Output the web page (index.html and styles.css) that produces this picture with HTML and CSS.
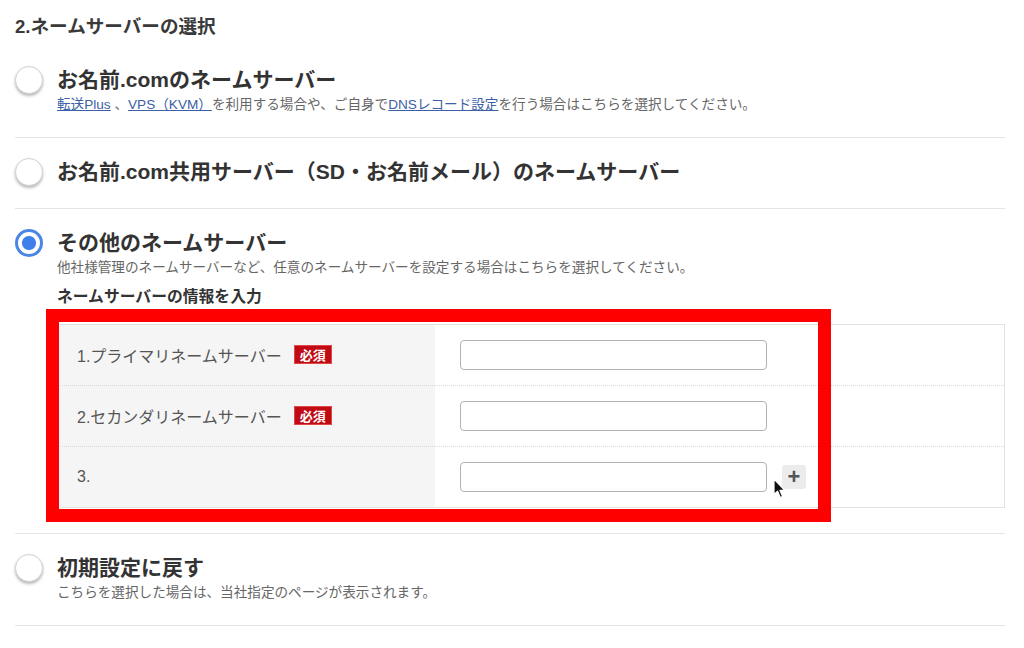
FILE: index.html
```html
<!DOCTYPE html>
<html lang="ja">
<head>
    <meta charset="UTF-8">
    <meta name="viewport" content="width=device-width, initial-scale=1.0">
    <title>ネームサーバーの選択</title>
    <link rel="stylesheet" href="styles.css">
</head>
<body>
    <div class="page">
        <h2 class="section-title">2.ネームサーバーの選択</h2>

        <div class="option">
            <span class="radio"></span>
            <div class="option-body">
                <div class="option-title">お名前.comのネームサーバー</div>
                <p class="option-note"><a href="#">転送Plus</a> 、<a href="#">VPS（KVM）</a>を利用する場合や、ご自身で<a href="#">DNSレコード設定</a>を行う場合はこちらを選択してください。</p>
            </div>
        </div>

        <div class="option option-short">
            <span class="radio"></span>
            <div class="option-body">
                <div class="option-title">お名前.com共用サーバー（SD・お名前メール）のネームサーバー</div>
            </div>
        </div>

        <div class="option option-open">
            <span class="radio checked"></span>
            <div class="option-body">
                <div class="option-title">その他のネームサーバー</div>
                <p class="option-note">他社様管理のネームサーバーなど、任意のネームサーバーを設定する場合はこちらを選択してください。</p>
                <div class="input-heading">ネームサーバーの情報を入力</div>

                <div class="ns-box">
                    <table class="ns-table">
                        <tr>
                            <th>1.プライマリネームサーバー<span class="required">必須</span></th>
                            <td><input type="text"></td>
                        </tr>
                        <tr>
                            <th>2.セカンダリネームサーバー<span class="required">必須</span></th>
                            <td><input type="text"></td>
                        </tr>
                        <tr>
                            <th>3.</th>
                            <td>
                                <div class="input-row">
                                    <input type="text">
                                    <span class="add-btn">+</span>
                                    <svg class="cursor" width="14" height="21" viewBox="0 0 14 21">
                                        <path d="M1 1 L1 16.5 L4.6 13.2 L7.3 19.6 L9.6 18.6 L7 12.4 L11.8 12.4 Z" fill="#111" stroke="#fff" stroke-width="1.2" stroke-linejoin="round"/>
                                    </svg>
                                </div>
                            </td>
                        </tr>
                    </table>
                    <div class="highlight"></div>
                </div>
            </div>
        </div>

        <div class="option">
            <span class="radio"></span>
            <div class="option-body">
                <div class="option-title">初期設定に戻す</div>
                <p class="option-note">こちらを選択した場合は、当社指定のページが表示されます。</p>
            </div>
        </div>
    </div>
</body>
</html>
```

FILE: styles.css
```css
body {
    margin: 0;
    font-family: "Liberation Sans", "Noto Sans CJK JP", sans-serif;
    color: #333;
    background-color: #fff;
}

.page {
    padding: 10px 19px 0 15px;
}

.section-title {
    margin: 0;
    height: 36px;
    font-size: 18.6px;
    line-height: 34px;
    font-weight: bold;
    color: #3a3a3a;
}

.option {
    display: flex;
    align-items: flex-start;
    gap: 14px;
    padding: 19px 0 22px;
    border-bottom: 1px solid #e6e6e6;
}

.option-short {
    padding-bottom: 21px;
}

.option-body {
    flex: 1;
}

.radio {
    flex: 0 0 28px;
    height: 28px;
    margin-top: 1px;
    box-sizing: border-box;
    border: 1px solid #d2d2d2;
    border-radius: 50%;
    background-color: #fff;
    box-shadow: 0 2px 3px rgba(0, 0, 0, 0.28);
}

.radio.checked {
    border: 3px solid #4a86e8;
    box-shadow: none;
    background: radial-gradient(circle, #3f7fea 0 6.5px, #fff 7.5px);
}

.option-title {
    font-size: 21px;
    line-height: 30px;
    font-weight: bold;
    color: #333;
}

.option-note {
    margin: 0;
    font-size: 13.6px;
    line-height: 20px;
    color: #666;
}

.option-note a {
    color: #3d5fa8;
    text-decoration: underline;
}

.input-heading {
    margin-top: 9px;
    font-size: 15.8px;
    line-height: 20px;
    font-weight: bold;
    color: #333;
}

.ns-box {
    position: relative;
    margin-top: 17px;
    margin-bottom: 3px;
}

.ns-table {
    width: 100%;
    border-collapse: collapse;
    border: 1px solid #e2e2e2;
}

.ns-table tr {
    border-bottom: 1px dotted #d8d8d8;
}

.ns-table tr:last-child {
    border-bottom: 1px solid #e2e2e2;
}

.ns-table th {
    width: 358px;
    height: 60px;
    padding: 0 0 0 19px;
    background-color: #f5f5f5;
    text-align: left;
    font-weight: normal;
    font-size: 16px;
    color: #555;
}

.ns-table td {
    padding: 0 0 0 25px;
    vertical-align: middle;
}

.required {
    display: inline-block;
    margin-left: 12px;
    padding: 0 5px;
    height: 19px;
    line-height: 19px;
    box-sizing: border-box;
    border: 1px solid #e04848;
    font-size: 13px;
    font-weight: bold;
    color: #fff;
    background-color: #c00a14;
    vertical-align: 2px;
}

.ns-table input {
    display: block;
    width: 307px;
    height: 30px;
    box-sizing: border-box;
    border: 1px solid #b3b3b3;
    border-radius: 4px;
    background-color: #fff;
}

.input-row {
    position: relative;
    display: flex;
    align-items: center;
}

.add-btn {
    width: 24px;
    height: 24px;
    margin-left: 15px;
    border-radius: 3px;
    background-color: #ececec;
    color: #555;
    font-size: 22px;
    font-weight: bold;
    line-height: 23px;
    text-align: center;
}

.cursor {
    position: absolute;
    left: 313px;
    top: 16px;
}

.highlight {
    position: absolute;
    left: -11px;
    top: -15px;
    width: 785px;
    height: 213px;
    box-sizing: border-box;
    border: 13px solid #ff0000;
    pointer-events: none;
}
```
